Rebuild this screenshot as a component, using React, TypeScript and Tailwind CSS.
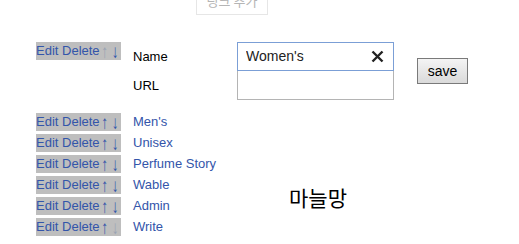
import React, { useState } from 'react';

const links = ['Men\'s', 'Unisex', 'Perfume Story', 'Wable', 'Admin', 'Write'];

const Arrow = ({ ch, off }: { ch: string; off?: boolean }) => (
  <span className="inline-flex justify-center items-center w-[10.5px] h-[18px]">
    <span
      className={`inline-block text-[14px] leading-[12px] scale-y-[1.35] ${
        off ? 'text-[#9aa3b3]' : 'text-[#3355aa]'
      }`}
    >
      {ch}
    </span>
  </span>
);

const RowActions = ({ first, last }: { first?: boolean; last?: boolean }) => (
  <span className="inline-flex items-center bg-[#bebebe] h-[18px] leading-[18px] whitespace-nowrap text-[#3355aa]">
    <span>Edit Delete</span>
    <Arrow ch="↑" off={first} />
    <Arrow ch="↓" off={last} />
  </span>
);

const App = () => {
  const [name, setName] = useState("Women's");
  const [url, setUrl] = useState('');

  return (
    <div className="w-[519px] h-[244px] overflow-hidden bg-white text-[13px] font-['Liberation_Sans',Arial,sans-serif]">
      <button className="ml-[196px] -mt-[13px] block w-[72px] h-[28px] border border-[#e6e6e6] bg-white text-[#b5b5b5] text-[13px] font-['Noto_Sans_CJK_KR',sans-serif]">
        링크 추가
      </button>

      <div className="flex mt-[27px] ml-[36px]">
        <div className="w-[97px] flex items-start">
          <RowActions first />
        </div>
        <div className="flex items-center">
          <div className="flex flex-col">
            <div className="flex items-center h-[29px]">
              <span className="w-[104px] text-black">Name</span>
              <div className="flex items-center w-[157px] h-[29px] border border-[#7b9fd6] pl-[8px] pr-[9px]">
                <input
                  value={name}
                  onChange={(e) => setName(e.target.value)}
                  className="flex-1 min-w-0 outline-none text-[14px] text-[#222] bg-transparent"
                />
                <svg width="13" height="13" viewBox="0 0 13 13" className="shrink-0">
                  <path d="M1.5 1.5 L11.5 11.5 M11.5 1.5 L1.5 11.5" stroke="#222" strokeWidth="2.4" />
                </svg>
              </div>
            </div>
            <div className="flex items-center h-[29px]">
              <span className="w-[104px] text-black">URL</span>
              <input
                value={url}
                onChange={(e) => setUrl(e.target.value)}
                className="w-[157px] h-[29px] border border-t-0 border-[#b4b4b4] outline-none px-[8px]"
              />
            </div>
          </div>
          <button className="ml-[23px] w-[51px] h-[26px] border border-[#7a7a7a] bg-gradient-to-b from-[#f4f4f4] to-[#dadada] text-[14px] text-black">
            save
          </button>
        </div>
      </div>

      <div className="flex mt-[13px] ml-[36px]">
        <div className="w-[253px] flex flex-col gap-[3px]">
          {links.map((l, i) => (
            <div key={l} className="flex h-[18px] items-center">
              <div className="w-[97px] flex">
                <RowActions last={i === links.length - 1} />
              </div>
              <a href="#" className="text-[#3355aa] leading-[18px]">{l}</a>
            </div>
          ))}
        </div>
        <div className="mt-[72px] text-[21px] leading-[24px] text-black font-['Noto_Sans_CJK_KR',sans-serif]">
          마늘망
        </div>
      </div>
    </div>
  );
};

export default App;
